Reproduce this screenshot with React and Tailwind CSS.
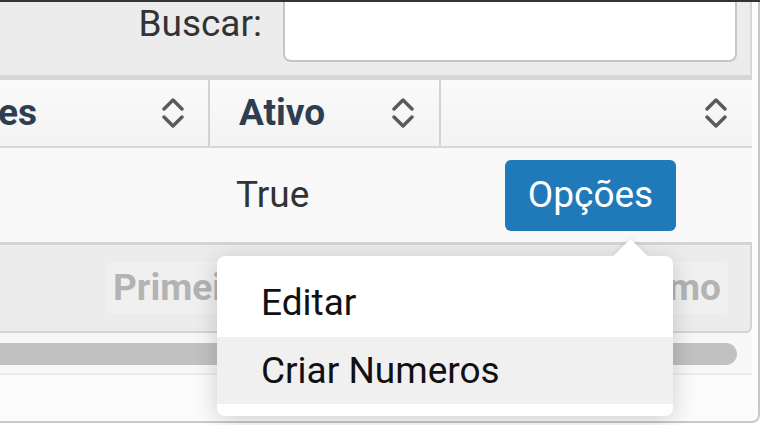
import React from 'react'

function SortIcon() {
  return (
    <svg width="22" height="30" viewBox="0 0 22 30" fill="none" stroke="#5a5a5a" strokeWidth="3.4" strokeLinecap="round" strokeLinejoin="round">
      <polyline points="2,11 11,2 20,11" />
      <polyline points="2,19 11,28 20,19" />
    </svg>
  )
}

export default function App() {
  return (
    <div className="relative h-[425px] w-[760px] overflow-hidden bg-white font-['Roboto',sans-serif] text-[37px]">
      <div className="h-[2px] bg-[#333]" />
      <div className="h-[421px] w-[760px] rounded-br-lg border-r-2 border-b-2 border-[#c8c8c8] bg-[#fbfbfb]">
        <div className="w-[752px]">
          {/* Search bar */}
          <div className="flex h-[78px] items-start justify-end border-r-2 border-b-[5px] border-[#d6d6d6] bg-[#ececec] pr-[13px]">
            <span className="mr-[21px] leading-[44px] text-[#333]">Buscar:</span>
            <div className="h-[60px] w-[454px] rounded-b-lg border-2 border-t-0 border-[#c6c6c6] bg-white" />
          </div>

          {/* Header */}
          <div className="flex h-[68px] border-b-2 border-[#d8d8d8] bg-gradient-to-b from-[#fafafa] to-[#f3f3f3] font-bold text-[#2c3e50]">
            <div className="flex w-[210px] items-center justify-between border-r-2 border-[#d2d2d2] pr-[24px]">
              <span className="-ml-[2px]">es</span>
              <SortIcon />
            </div>
            <div className="flex w-[231px] items-center justify-between border-r-2 border-[#d2d2d2] pl-[29px] pr-[25px]">
              <span>Ativo</span>
              <SortIcon />
            </div>
            <div className="flex flex-1 items-center justify-end pr-[25px]">
              <SortIcon />
            </div>
          </div>

          {/* Row */}
          <div className="flex h-[94px] items-center bg-[#f9f9f9] text-[#333]">
            <div className="w-[210px]" />
            <div className="w-[231px] pl-[26px]">True</div>
            <div className="flex flex-1 pl-[64px]">
              <div className="flex h-[71px] w-[171px] items-center justify-center rounded-md bg-[#2079b9] text-white">
                Opções
              </div>
            </div>
          </div>

          {/* Pagination */}
          <div className="flex h-[91px] items-center justify-between rounded-br-md border-t-[3px] border-r-2 border-b-2 border-[#d4d4d4] bg-[#ececec] pr-[22px] pl-[106px] font-bold text-[#b3b3b3]">
            <div className="flex h-[52px] items-center rounded-md bg-[#f0f0f0] px-[7px]">Primeiro</div>
            <div className="flex h-[52px] items-center rounded-md bg-[#f0f0f0] px-[7px]">Último</div>
          </div>

          {/* Scrollbar */}
          <div className="h-[42px] border-b-2 border-[#ececec] bg-[#f7f7f7] pt-[10px]">
            <div className="h-[22px] w-[737px] rounded-r-full bg-[#c1c1c1]" />
          </div>
        </div>
      </div>

      {/* Dropdown menu */}
      <div className="absolute top-[256px] left-[217px] w-[456px] rounded-lg bg-white py-[12px] text-[#111] shadow-[0_4px_24px_rgba(0,0,0,0.18)]">
        <div className="absolute -top-[12px] left-[401px] h-[25px] w-[25px] rotate-45 bg-white shadow-[-2px_-2px_4px_rgba(0,0,0,0.06)]" />
        <div className="relative flex h-[69px] items-center bg-white pl-[44px]">Editar</div>
        <div className="relative flex h-[67px] items-center bg-[#f0f0f0] pl-[44px]">Criar Numeros</div>
      </div>
    </div>
  )
}
